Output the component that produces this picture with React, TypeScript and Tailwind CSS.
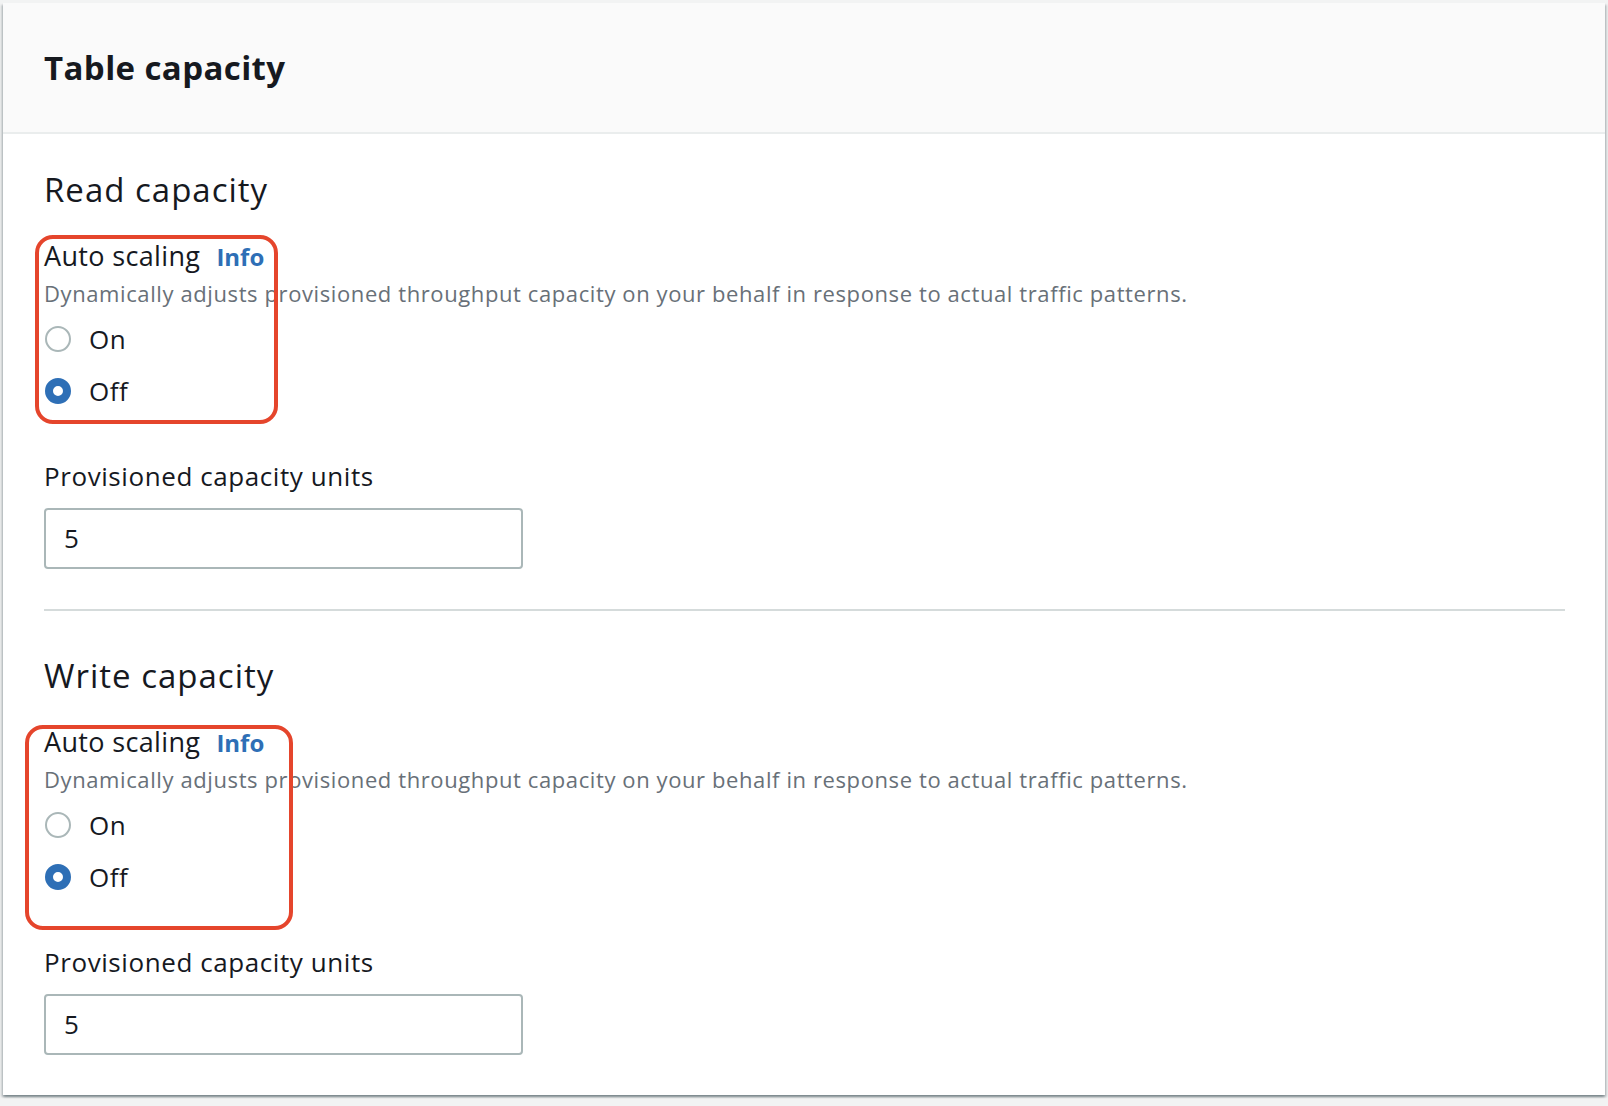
const font = { fontFamily: '"Open Sans", "Liberation Sans", sans-serif' };

function Radio({ checked, label }: { checked: boolean; label: string }) {
    return (
        <div className="h-[52px] flex items-center">
            <span
                className={
                    checked
                        ? "w-[26px] h-[26px] rounded-full border-[8px] border-[#2e6fb6] bg-white ml-px"
                        : "w-[26px] h-[26px] rounded-full border-2 border-[#aab7b8] bg-white ml-px"
                }
            />
            <span className="ml-[18px] text-[26px] tracking-[0.5px] leading-[36px] text-[#16191f]">
                {label}
            </span>
        </div>
    );
}

function CapacitySection({
    title,
    box,
}: {
    title: string;
    box: string;
}) {
    return (
        <section className="relative">
            <h2 className="text-[33px] tracking-[1px] leading-[40px] text-[#16191f]">
                {title}
            </h2>
            <div className="mt-[28px] flex items-baseline gap-[16px] h-[36px]">
                <span className="text-[27px] tracking-[0.35px] leading-[36px] text-[#16191f]">
                    Auto scaling
                </span>
                <a className="text-[24px] leading-[36px] font-bold text-[#2e6fb6]">
                    Info
                </a>
            </div>
            <p className="mt-[4px] text-[22px] tracking-[0.6px] leading-[30px] text-[#687078]">
                Dynamically adjusts provisioned throughput capacity on your behalf in
                response to actual traffic patterns.
            </p>
            <div className="mt-[5px] flex flex-col">
                <Radio checked={false} label="On" />
                <Radio checked={true} label="Off" />
            </div>
            <div className="mt-[41px] text-[26px] tracking-[0.58px] leading-[36px] text-[#16191f]">
                Provisioned capacity units
            </div>
            <div className="mt-[14px] w-[479px] h-[61px] border-2 border-[#aab7b8] rounded-[4px] flex items-center px-[18px] text-[26px] text-[#16191f]">
                5
            </div>
            {/* highlight box drawn over the auto scaling field */}
            <div className={box} />
        </section>
    );
}

export default function App() {
    return (
        <main
            className="w-full min-h-screen bg-[#f2f3f3] pt-[3px] pl-[3px] pr-[3px]"
            style={font}
        >
            <div className="bg-white shadow-[0_2px_2px_0_rgba(0,28,36,0.3),2px_2px_2px_0_rgba(0,28,36,0.15),-2px_2px_2px_0_rgba(0,28,36,0.15)]">
                <div className="h-[131px] bg-[#fafafa] border-b-2 border-[#eaeded] flex items-center px-[41px]">
                    <h1 className="text-[33px] tracking-[0.4px] font-bold text-[#16191f] leading-[40px]">
                        Table capacity
                    </h1>
                </div>
                <div className="pl-[41px] pr-[40px] pt-[36px] pb-[40px]">
                    <CapacitySection
                        title="Read capacity"
                        box="absolute left-[-9px] top-[65px] w-[243px] h-[189px] border-[4px] border-[#e5452c] rounded-[18px]"
                    />
                    <div className="mt-[40px] h-[2px] bg-[#d5dbdb]" />
                    <div className="mt-[45px]">
                        <CapacitySection
                            title="Write capacity"
                            box="absolute left-[-19px] top-[69px] w-[268px] h-[205px] border-[4px] border-[#e5452c] rounded-[18px]"
                        />
                    </div>
                </div>
            </div>
        </main>
    );
}
